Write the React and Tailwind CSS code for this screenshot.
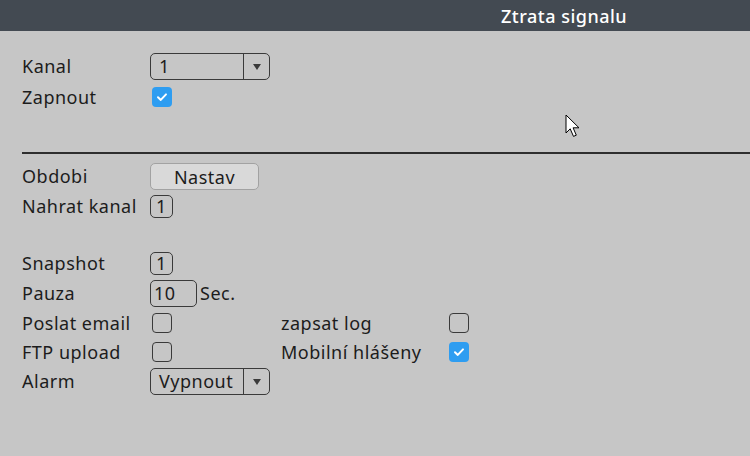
import { useState } from 'react'

function Checkbox({ checked }) {
  if (checked) {
    return (
      <span className="flex items-center justify-center w-[20px] h-[20px] rounded-[4px] bg-[#2e9df1]">
        <svg width="14" height="14" viewBox="0 0 14 14" fill="none">
          <path d="M3 7.3l2.8 2.6L11 4.4" stroke="white" strokeWidth="2" strokeLinecap="round" strokeLinejoin="round" />
        </svg>
      </span>
    )
  }
  return <span className="block w-[20px] h-[20px] rounded-[4px] border border-[#3a3a3a]" />
}

function Select({ value }) {
  return (
    <div className="flex w-[120px] h-[27px] rounded-[5px] border border-[#3a3a3a]">
      <span className="flex-1 pl-[8px] leading-[25px]">{value}</span>
      <span className="flex items-center justify-center w-[26px] border-l border-[#3a3a3a]">
        <svg width="10" height="8" viewBox="0 0 10 8">
          <path d="M1 1h8L5 7z" fill="#3a3a3a" />
        </svg>
      </span>
    </div>
  )
}

function NumBox({ value, wide }) {
  return (
    <span className={`block rounded-[5px] border border-[#3a3a3a] ${wide ? 'w-[47px] h-[27px] leading-[25px] pl-[3px]' : 'w-[23px] h-[23px] leading-[21px] text-center'}`}>
      {value}
    </span>
  )
}

function Row({ label, children, className = '' }) {
  return (
    <div className={`flex items-center ${className}`}>
      <span className="w-[128px] shrink-0">{label}</span>
      {children}
    </div>
  )
}

export default function App() {
  const [zapnout] = useState(true)

  return (
    <div
      className="relative w-[750px] h-[456px] bg-[#c6c6c6] text-[#1c1c1c] text-[18px] tracking-[0.5px] overflow-hidden"
      style={{ fontFamily: '"Noto Sans", "Open Sans", sans-serif' }}
    >
      <div className="h-[31px] bg-[#434a52] flex items-center">
        <div className="ml-[501px] text-white text-[18px] font-medium leading-none">Ztrata signalu</div>
      </div>

      <div className="pl-[22px] pt-[22px]">
        <Row label="Kanal" className="h-[27px]">
          <Select value="1" />
        </Row>
        <Row label="Zapnout" className="h-[20px] mt-[7px]">
          <span className="ml-[2px]"><Checkbox checked={zapnout} /></span>
        </Row>

        <div className="mt-[45px] h-[2px] bg-[#2e2e2e]" />

        <Row label="Obdobi" className="h-[27px] mt-[9px]">
          <button className="w-[109px] h-[27px] rounded-[5px] border border-[#a2a2a2] bg-[#d9d9d9] text-[18px] tracking-[0.5px] leading-none">
            Nastav
          </button>
        </Row>
        <Row label="Nahrat kanal" className="h-[23px] mt-[5px]">
          <NumBox value="1" />
        </Row>

        <Row label="Snapshot" className="h-[23px] mt-[34px]">
          <NumBox value="1" />
        </Row>
        <Row label="Pauza" className="h-[27px] mt-[5px]">
          <NumBox value="10" wide />
          <span className="ml-[3px]">Sec.</span>
        </Row>

        <div className="flex mt-[6px]">
          <div>
            <Row label="Poslat email" className="h-[20px]">
              <span className="ml-[2px]"><Checkbox /></span>
            </Row>
            <Row label="FTP upload" className="h-[20px] mt-[9px]">
              <span className="ml-[2px]"><Checkbox /></span>
            </Row>
          </div>
          <div className="ml-[109px]">
            <div className="flex items-center h-[20px]">
              <span className="w-[168px]">zapsat log</span>
              <Checkbox />
            </div>
            <div className="flex items-center h-[20px] mt-[9px]">
              <span className="w-[168px]">Mobilní hlášeny</span>
              <Checkbox checked />
            </div>
          </div>
        </div>

        <Row label="Alarm" className="h-[27px] mt-[6px]">
          <Select value="Vypnout" />
        </Row>
      </div>

      <svg className="absolute left-[565px] top-[114px]" width="16" height="26" viewBox="0 0 16 26">
        <path d="M1 1v18l4.2-4.2 3.3 7.6 2.8-1.2-3.2-7.4H14z" fill="white" stroke="black" strokeWidth="1" strokeLinejoin="round" />
      </svg>
    </div>
  )
}
